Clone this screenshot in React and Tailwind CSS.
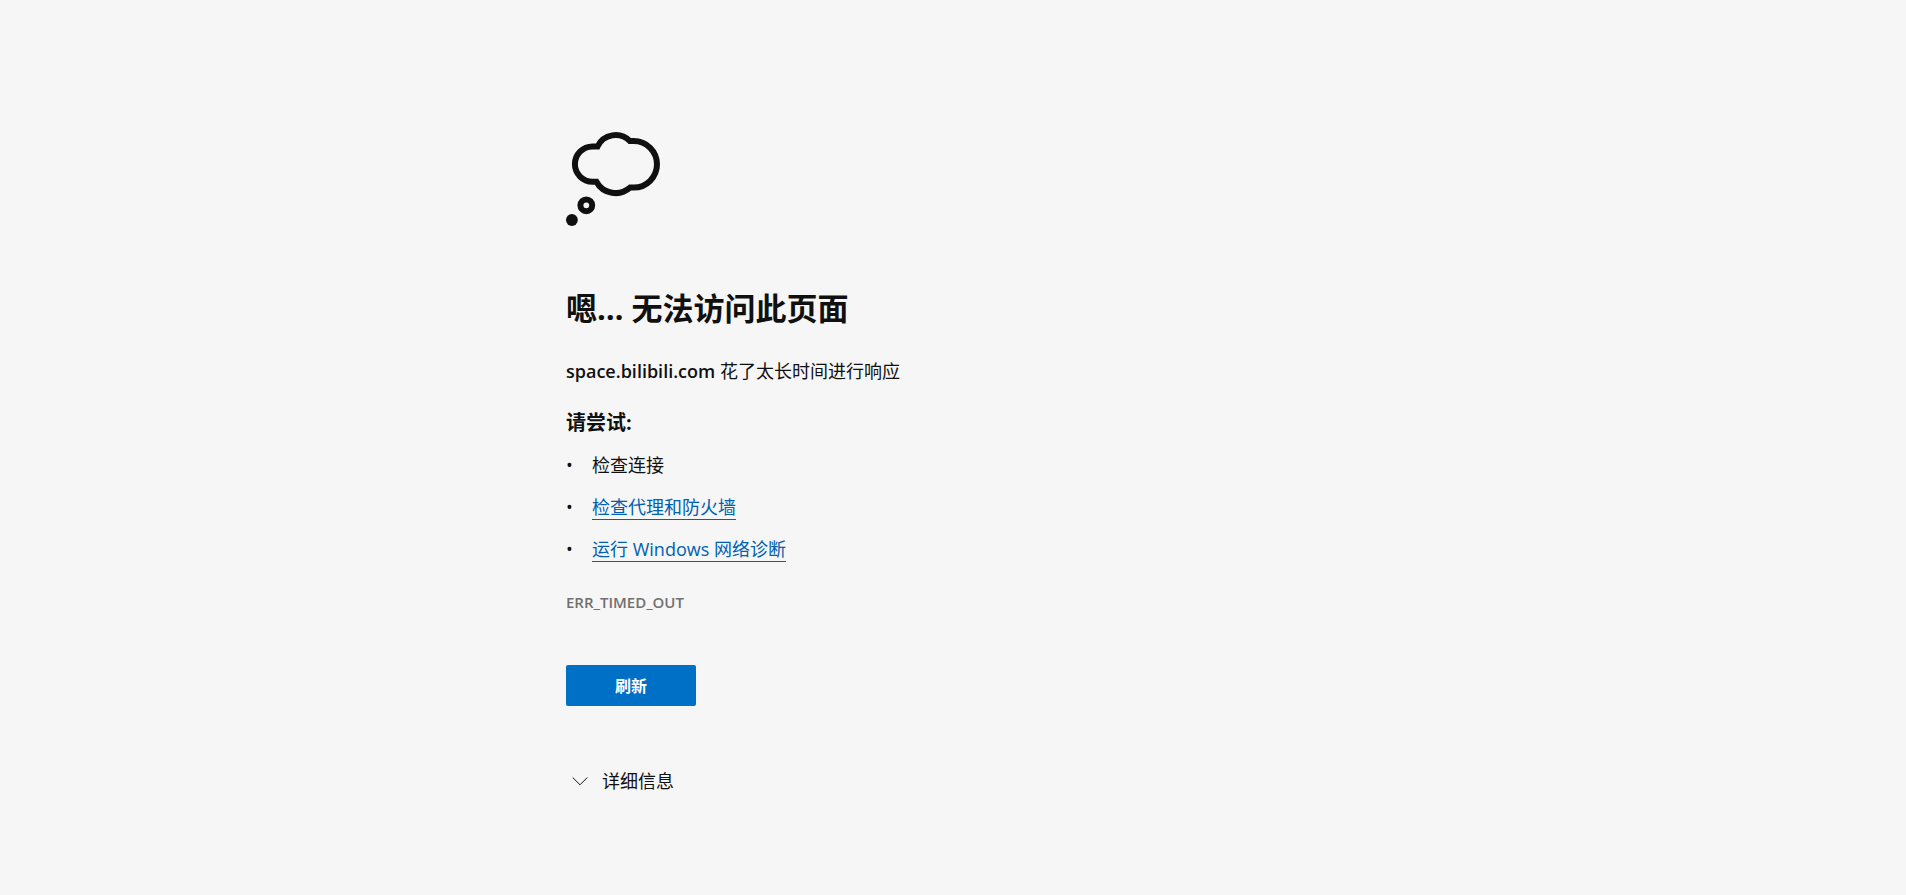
import { useState } from "react";

function ThoughtIcon() {
  return (
    <svg
      className="block h-[94px] w-[94px] overflow-visible"
      viewBox="0 0 94 94"
      fill="none"
      stroke="#101010"
      strokeWidth="6"
      aria-hidden="true"
    >
      <path d="M31.5 14.5H26.5a17.5 17.5 0 0 0 0 35.2H30.4A22 22 0 0 0 64.2 55.6H67.7a23.3 23.3 0 0 0 0-46.6H63.8A20 20 0 0 0 31.5 14.5Z" />
      <circle cx="20.3" cy="73.3" r="5.9" />
      <circle cx="5.9" cy="88" r="5.9" fill="#101010" stroke="none" />
    </svg>
  );
}

const suggestions = [
  { text: "检查连接" },
  { text: "检查代理和防火墙", href: "#proxy" },
  { text: "运行 Windows 网络诊断", href: "#diagnose" },
];

export default function App() {
  const [open, setOpen] = useState(false);

  return (
    <div className="min-h-screen bg-[#f6f6f6] px-4 py-[132px] font-['Open_Sans','Noto_Sans_CJK_SC',sans-serif] text-[18px] leading-6 text-[#101010]">
      <main className="mx-auto max-w-[774px]">
        <ThoughtIcon />

        <h1 className="mt-[62px] text-[31px] leading-10 font-bold">
          嗯… 无法访问此页面
        </h1>

        <p className="mt-[31px]">
          <strong className="font-semibold">space.bilibili.com</strong>{" "}
          花了太长时间进行响应
        </p>

        <h2 className="mt-[26px] text-xl leading-7 font-bold">请尝试:</h2>

        <ul className="mt-4 flex flex-col gap-[18px]">
          {suggestions.map((item) => (
            <li key={item.text} className="flex h-6 items-center">
              <span className="w-[26px]">•</span>
              {item.href ? (
                <a
                  href={item.href}
                  className="border-b border-[#0061b0] text-[#0061b0]"
                >
                  {item.text}
                </a>
              ) : (
                <span>{item.text}</span>
              )}
            </li>
          ))}
        </ul>

        <p className="mt-[29px] text-[15px] leading-6 font-semibold text-[#707070]">
          ERR_TIMED_OUT
        </p>

        <button
          type="button"
          className="mt-[51px] block h-[41px] w-[130px] rounded-[2px] bg-[#0070c6] text-[16px] font-bold text-white"
          onClick={() => window.location.reload()}
        >
          刷新
        </button>

        <button
          type="button"
          aria-expanded={open}
          className="mt-[63px] flex items-center gap-3.5 pl-1.5"
          onClick={() => setOpen(!open)}
        >
          <svg
            className="h-4 w-4"
            viewBox="0 0 16 16"
            fill="none"
            stroke="currentColor"
            aria-hidden="true"
          >
            <path d="M.7 4.5 8 11.8l7.3-7.3" />
          </svg>
          详细信息
        </button>
      </main>
    </div>
  );
}
